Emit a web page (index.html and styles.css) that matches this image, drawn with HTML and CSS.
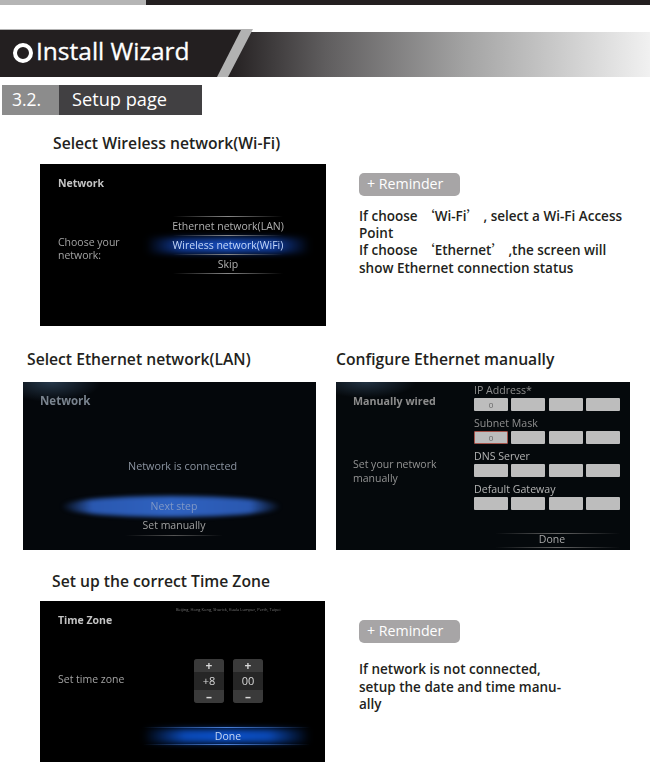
FILE: index.html
```html
<!DOCTYPE html>
<html lang="en">
<head>
<meta charset="utf-8">
<title>Install Wizard</title>
<link rel="stylesheet" href="styles.css">
</head>
<body>
<div class="topbar"><div class="topbar-light"></div><div class="topbar-dark"></div></div>

<header class="banner">
  <div class="banner-stripe">
    <div class="banner-dark">
      <span class="ring"></span>
      <h1 class="banner-title">Install Wizard</h1>
    </div>
  </div>
</header>

<div class="section-bar">
  <div class="section-num">3.2.</div>
  <div class="section-name">Setup page</div>
</div>

<h2 class="heading heading-wifi">Select Wireless network(Wi-Fi)</h2>
<section class="row-wifi">
  <div class="screen screen-wifi">
    <div class="s-title">Network</div>
    <div class="wifi-body">
      <div class="s-label wifi-label">Choose your<br>network:</div>
      <div class="menu">
        <div class="menu-item">Ethernet network(LAN)</div>
        <div class="menu-item menu-active">Wireless network(WiFi)</div>
        <div class="menu-item">Skip</div>
      </div>
    </div>
  </div>
  <div class="note">
    <div class="pill">+ Reminder</div>
    <p class="note-text">If choose <span class="cjk">‘</span>Wi-Fi<span class="cjk">’</span> , select a Wi-Fi Access<br>Point<br>If choose <span class="cjk">‘</span>Ethernet<span class="cjk">’</span> ,the screen will<br>show Ethernet connection status</p>
  </div>
</section>

<section class="row-lan">
  <div class="col-lan">
    <h2 class="heading heading-lan">Select Ethernet network(LAN)</h2>
    <div class="screen screen-lan">
      <div class="s-title lan-title">Network</div>
      <div class="lan-status">Network is connected</div>
      <div class="lan-next">Next step</div>
      <div class="lan-manual">Set manually</div>
    </div>
  </div>
  <div class="col-manual">
    <h2 class="heading">Configure Ethernet manually</h2>
    <div class="screen screen-manual">
      <div class="manual-left">
        <div class="s-title manual-title">Manually wired</div>
        <div class="s-label manual-label">Set your network<br>manually</div>
      </div>
      <div class="manual-right">
        <div class="f-label">IP Address*</div>
        <div class="f-row"><div class="f-box">0</div><div class="f-box"></div><div class="f-box"></div><div class="f-box"></div></div>
        <div class="f-label">Subnet Mask</div>
        <div class="f-row"><div class="f-box f-focus">0</div><div class="f-box"></div><div class="f-box"></div><div class="f-box"></div></div>
        <div class="f-label f-label-bright">DNS Server</div>
        <div class="f-row"><div class="f-box"></div><div class="f-box"></div><div class="f-box"></div><div class="f-box"></div></div>
        <div class="f-label f-label-bright">Default Gateway</div>
        <div class="f-row"><div class="f-box"></div><div class="f-box"></div><div class="f-box"></div><div class="f-box"></div></div>
        <div class="manual-done">Done</div>
      </div>
    </div>
  </div>
</section>

<h2 class="heading heading-tz">Set up the correct Time Zone</h2>
<section class="row-tz">
  <div class="screen screen-tz">
    <div class="tz-cities">Beijing, Hong Kong, Shurick, Kuala Lumpur, Perth, Taipei</div>
    <div class="s-title tz-title">Time Zone</div>
    <div class="tz-body">
      <div class="s-label tz-label">Set time zone</div>
      <div class="spin"><span class="spin-btn spin-top">+</span><span class="spin-val">+8</span><span class="spin-btn spin-bottom">–</span></div>
      <div class="spin"><span class="spin-btn spin-top">+</span><span class="spin-val">00</span><span class="spin-btn spin-bottom">–</span></div>
    </div>
    <div class="tz-done">Done</div>
  </div>
  <div class="note note-tz">
    <div class="pill">+ Reminder</div>
    <p class="note-text note-text-tz">If network is not connected,<br>setup the date and time manu-<br>ally</p>
  </div>
</section>
</body>
</html>
```
FILE: styles.css
```css
* { box-sizing: border-box; }
html, body { margin: 0; padding: 0; }
body {
  width: 650px;
  height: 762px;
  overflow: hidden;
  background: #fff;
  color: #231f20;
  font-family: "Open Sans", "Noto Sans", sans-serif;
}
h1, h2, p { margin: 0; }

.topbar { display: flex; height: 5px; }
.topbar-light { width: 146px; background: #b5b5b5; }
.topbar-dark { flex: 1; background: #231f20; }

.banner {
  height: 48px;
  margin-top: 24px;
  background: linear-gradient(90deg, #231f20 228px, #5f5d5e 325px, #a3a3a3 465px, #f1f1f1 650px) 0 3px / 100% 45px no-repeat;
}
.banner-stripe {
  width: 253px;
  height: 48px;
  background: #b2b2b2;
  clip-path: polygon(0 0, 253px 0, 228px 48px, 0 48px);
}
.banner-dark {
  display: flex;
  align-items: center;
  width: 241px;
  height: 48px;
  padding-left: 13px;
  background: #231f20;
  clip-path: polygon(0 1px, 241px 1px, 217px 48px, 0 48px);
}
.ring {
  width: 20px;
  height: 20px;
  margin-top: -1px;
  border: 4.5px solid #fff;
  border-radius: 50%;
  flex: none;
}
.banner-title {
  margin: -4px 0 0 3px;
  color: #fff;
  font-size: 24.5px;
  font-weight: 400;
  line-height: 34px;
  -webkit-text-stroke: 0.3px #fff;
}

.section-bar {
  display: flex;
  width: 200px;
  height: 30px;
  margin: 8px 0 0 2px;
  color: #fff;
  font-size: 18.2px;
  font-weight: 500;
  line-height: 29px;
}
.section-num { width: 57px; padding-left: 10px; background: #8c8c8c; font-size: 17.5px; font-weight: 400; }
.section-name { flex: 1; padding-left: 13px; background: #414042; }

.heading {
  font-size: 15.7px;
  font-weight: 600;
  line-height: 20px;
  white-space: nowrap;
}
.heading-wifi { margin: 18px 0 11px 53px; }
.heading-lan { margin-left: 4px; }
.heading-tz { margin: 21px 0 10px 52px; }

.row-wifi, .row-tz { display: flex; margin-left: 40px; }

.screen {
  background: #000;
  color: #a8a8a8;
  font-size: 10.5px;
  overflow: hidden;
  filter: blur(0.35px);
}
.s-title { color: #c4c4c4; font-size: 10.5px; font-weight: 700; line-height: 14px; }
.s-label { color: #a3a3a3; font-size: 10.5px; line-height: 13px; }

.screen-wifi { width: 286px; height: 162px; padding: 12px 0 0 18px; }
.wifi-body { display: flex; margin-top: 26px; }
.wifi-label { width: 82px; padding-top: 20px; flex: none; }
.menu { width: 176px; padding-top: 1px; background: linear-gradient(90deg, transparent, #888, transparent) center top / 110px 1px no-repeat; }
.menu-item {
  height: 19px;
  line-height: 18px;
  text-align: center;
  white-space: nowrap;
  color: #b0b0b0;
  background: linear-gradient(90deg, transparent, #888, transparent) center bottom / 110px 1px no-repeat;
}
.menu-active { position: relative; color: #c3d6f7; }
.menu-active::before {
  content: "";
  position: absolute;
  inset: 2px 6px;
  z-index: -1;
  background: linear-gradient(90deg, rgba(10, 30, 90, 0) 0, #0f3a98 22%, #164bb8 50%, #0f3a98 78%, rgba(10, 30, 90, 0) 100%);
  filter: blur(3px);
}

.note { width: 270px; margin-left: 33px; padding-top: 9px; }
.pill {
  width: 101px;
  height: 23px;
  padding-left: 8px;
  border-radius: 5px;
  background: #a7a5a6;
  color: #fff;
  font-size: 14.2px;
  font-weight: 500;
  line-height: 22px;
}
.note-text { margin-top: 12px; font-size: 13.5px; font-weight: 600; line-height: 17.2px; white-space: nowrap; }
.cjk { font-family: "Noto Sans CJK SC", sans-serif; font-size: 13.5px; font-weight: 500; line-height: 1; }

.row-lan { display: flex; margin: 23px 0 0 23px; }
.col-lan { width: 313px; }
.col-lan .screen { margin-top: 13px; }
.col-manual .screen { margin-top: 13px; }

.screen-lan {
  display: flex;
  flex-direction: column;
  width: 293px;
  height: 168px;
  background:
    radial-gradient(ellipse 50px 20px at 28px 0, #26384a, rgba(20, 30, 40, 0)),
    #04070b;
}
.lan-title { margin: 11px 0 0 17px; color: #79838e; font-size: 11.5px; line-height: 15px; }
.lan-status { margin: 51px 0 0 105px; color: #8b93a0; font-size: 10.8px; line-height: 14px; white-space: nowrap; }
.lan-next {
  position: relative;
  width: 224px;
  height: 23px;
  margin: 22px 0 0 36px;
  padding-left: 6px;
  color: #8098c6;
  line-height: 22px;
  text-align: center;
}
.lan-next::before {
  content: "";
  position: absolute;
  inset: 1px 2px;
  z-index: -1;
  border-radius: 50%;
  background: linear-gradient(90deg, rgba(10, 25, 60, 0) 0, #2a58b0 14%, #2f62c0 50%, #2a58b0 86%, rgba(10, 25, 60, 0) 100%);
  filter: blur(2px);
}
.lan-manual {
  width: 98px;
  height: 18px;
  margin: 0 0 0 102px;
  color: #a0a0a0;
  line-height: 14px;
  text-align: center;
  background: linear-gradient(90deg, transparent, #555, transparent) center bottom / 98px 1px no-repeat;
}

.screen-manual {
  display: flex;
  width: 294px;
  height: 168px;
  background:
    radial-gradient(ellipse 50px 16px at 30px 0, #223242, rgba(20, 30, 40, 0)),
    #05090c;
}
.manual-left { width: 138px; flex: none; padding: 12px 0 0 17px; }
.manual-title { color: #8d8d8d; font-size: 10.7px; white-space: nowrap; }
.manual-label { margin-top: 49px; color: #939393; line-height: 14px; }
.manual-right { width: 146px; }
.f-label { height: 16px; color: #8f8f8f; font-size: 10.6px; line-height: 16px; white-space: nowrap; }
.f-label-bright { color: #b4b4b4; }
.f-row { display: flex; justify-content: space-between; height: 13px; margin-bottom: 4px; }
.f-box {
  width: 34px;
  height: 13px;
  background: #bdbdbd;
  color: #666;
  font-size: 8px;
  line-height: 13px;
  text-align: center;
  border-radius: 1px;
}
.f-focus { border: 1px solid #a5534a; line-height: 11px; }
.manual-done {
  height: 15px;
  margin: 23px 0 0 21px;
  padding-right: 11px;
  color: #a8a8a8;
  line-height: 12px;
  text-align: center;
  background:
    linear-gradient(90deg, transparent, #666, transparent) center top / 100% 1px no-repeat,
    linear-gradient(90deg, transparent, #666, transparent) center bottom / 100% 1px no-repeat;
}

.screen-tz { width: 285px; height: 161px; padding: 5px 0 0 18px; }
.tz-cities { height: 8px; margin-left: 118px; color: #777; font-size: 4px; line-height: 8px; white-space: nowrap; }
.tz-title { margin-top: -1px; line-height: 14px; }
.tz-body { display: flex; margin-top: 32px; height: 44px; }
.tz-label { width: 136px; flex: none; padding-top: 14px; }
.spin {
  display: flex;
  flex-direction: column;
  width: 30px;
  height: 44px;
  margin-right: 9px;
  background: #262626;
  border-radius: 3px;
  color: #d8d8d8;
  text-align: center;
}
.spin-btn { height: 13px; background: #3a3a3a; font-size: 12px; font-weight: 700; line-height: 13px; }
.spin-top { border-radius: 3px 3px 0 0; }
.spin-bottom { border-radius: 0 0 3px 3px; }
.spin-val { height: 18px; font-size: 11px; line-height: 18px; }
.tz-done {
  position: relative;
  width: 167px;
  height: 18px;
  margin: 24px 0 0 85px;
  padding-left: 3px;
  color: #c6d6f2;
  font-size: 10.5px;
  line-height: 18px;
  text-align: center;
  background:
    linear-gradient(90deg, transparent, #4a7fd8, transparent) center top / 100% 1px no-repeat,
    linear-gradient(90deg, transparent, #4a7fd8, transparent) center bottom / 100% 1px no-repeat;
}
.tz-done::before {
  content: "";
  position: absolute;
  inset: 2px 0;
  z-index: -1;
  background: linear-gradient(90deg, rgba(0, 20, 70, 0) 0, #0a48b4 25%, #0b50c8 50%, #0a48b4 75%, rgba(0, 20, 70, 0) 100%);
  filter: blur(3px);
}
.note-tz { margin-left: 34px; padding-top: 19px; }
.note-text-tz { margin-top: 18px; line-height: 17.5px; }
```
